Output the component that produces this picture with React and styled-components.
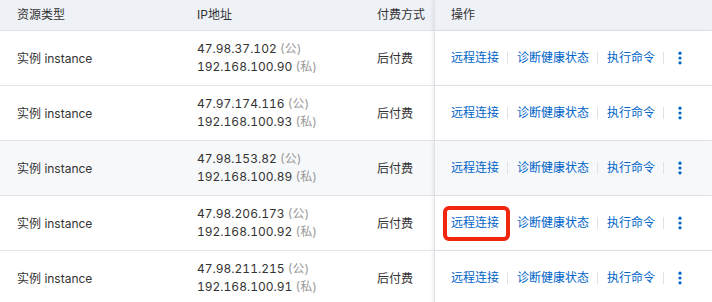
import React from 'react';
import styled, { createGlobalStyle } from 'styled-components';

const GlobalStyle = createGlobalStyle`
  html, body { margin: 0; padding: 0; background: #fff; }
  body {
    font-family: Inter, "Noto Sans CJK SC", sans-serif;
    font-size: 12px;
    color: #333;
    overflow: hidden;
  }
  th, td { box-sizing: border-box; }
`;

const Table = styled.table`
  width: 712px;
  border-collapse: separate;
  border-spacing: 0;
  table-layout: fixed;
`;

const HeadCell = styled.th`
  height: 31px;
  padding: 0 0 4px ${p => p.$pad || 17}px;
  background: #eef1f6;
  border-bottom: 1px solid #dfe2e8;
  font-weight: 400;
  text-align: left;
  color: #333;
  width: ${p => (p.$w ? `${p.$w}px` : 'auto')};
  ${p => p.$fixed && `
    border-left: 1px solid #dfe2e8;
    box-shadow: -2px 0 3px rgba(0,0,0,0.06);
  `}
`;

const Row = styled.tr`
  background: ${p => (p.$hover ? '#f7f8fa' : '#fff')};
`;

const Cell = styled.td`
  height: 55px;
  padding: 0 0 1px ${p => p.$pad || 17}px;
  border-bottom: 1px solid #e3e5ea;
  vertical-align: middle;
  white-space: nowrap;
  background: inherit;
  ${p => p.$fixed && `
    border-left: 1px solid #dfe2e8;
    box-shadow: -2px 0 3px rgba(0,0,0,0.06);
  `}
`;

const IpLine = styled.div`
  line-height: 18px;
  font-variant-numeric: tabular-nums;
`;

const Tag = styled.span`
  color: #999;
`;

const Actions = styled.div`
  display: flex;
  align-items: center;
`;

const ActionLink = styled.a`
  position: relative;
  color: #0064c8;
  cursor: pointer;
  line-height: 18px;
  ${p => p.$marked && `
    &::after {
      content: '';
      position: absolute;
      left: -8px;
      right: -11px;
      top: -8px;
      bottom: -9px;
      border: 4px solid #f0260f;
      border-radius: 6px;
    }
  `}
`;

const Sep = styled.span`
  width: 1px;
  height: 12px;
  background: #e0e2e6;
  margin: 0 9px 0 8px;
`;

const More = styled.span`
  display: flex;
  margin-left: 5px;
`;

const Dots = () => (
  <svg width="4" height="14" viewBox="0 0 4 14">
    <circle cx="2" cy="2.2" r="1.6" fill="#0064c8" />
    <circle cx="2" cy="7" r="1.6" fill="#0064c8" />
    <circle cx="2" cy="11.8" r="1.6" fill="#0064c8" />
  </svg>
);

const rows = [
  { pub: '47.98.37.102', pri: '192.168.100.90' },
  { pub: '47.97.174.116', pri: '192.168.100.93' },
  { pub: '47.98.153.82', pri: '192.168.100.89', hover: true },
  { pub: '47.98.206.173', pri: '192.168.100.92', marked: true },
  { pub: '47.98.211.215', pri: '192.168.100.91' },
];

export default function App() {
  return (
    <>
      <GlobalStyle />
      <Table>
        <thead>
          <tr>
            <HeadCell $w={180}>资源类型</HeadCell>
            <HeadCell $w={180}>IP地址</HeadCell>
            <HeadCell $w={74}>付费方式</HeadCell>
            <HeadCell $fixed $pad={16}>操作</HeadCell>
          </tr>
        </thead>
        <tbody>
          {rows.map(r => (
            <Row key={r.pub} $hover={r.hover}>
              <Cell>实例 instance</Cell>
              <Cell>
                <IpLine>{r.pub} <Tag>(公)</Tag></IpLine>
                <IpLine>{r.pri} <Tag>(私)</Tag></IpLine>
              </Cell>
              <Cell>后付费</Cell>
              <Cell $fixed $pad={16}>
                <Actions>
                  <ActionLink $marked={r.marked}>远程连接</ActionLink>
                  <Sep />
                  <ActionLink>诊断健康状态</ActionLink>
                  <Sep />
                  <ActionLink>执行命令</ActionLink>
                  <Sep />
                  <More><Dots /></More>
                </Actions>
              </Cell>
            </Row>
          ))}
        </tbody>
      </Table>
    </>
  );
}
